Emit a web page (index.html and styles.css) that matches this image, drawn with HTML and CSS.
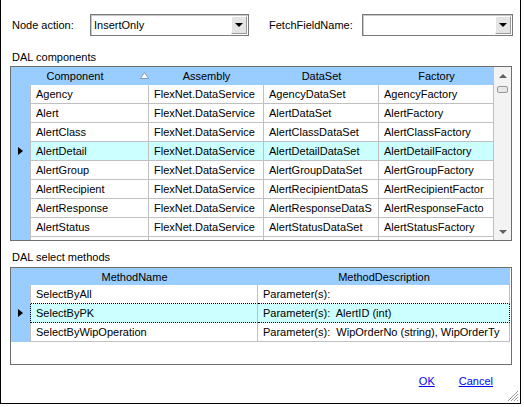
FILE: index.html
```html
<!DOCTYPE html>
<html lang="en">
<head>
  <meta charset="UTF-8" />
  <title>DAL Node Settings</title>
  <link rel="stylesheet" href="styles.css">
</head>
<body>
  <div class="dialog">
    <div class="top-row">
      <span class="field-label">Node action:</span>
      <div class="combo combo-action">
        <span class="combo-text">InsertOnly</span>
        <span class="combo-btn"><i class="arrow-down"></i></span>
      </div>
      <span class="field-label fetch-label">FetchFieldName:</span>
      <div class="combo combo-fetch">
        <span class="combo-text"></span>
        <span class="combo-btn"><i class="arrow-down"></i></span>
      </div>
    </div>

    <div class="section-label first">DAL components</div>
    <div class="grid grid-components">
      <div class="grid-view">
        <table>
          <colgroup>
            <col style="width:20px"><col style="width:118px"><col style="width:115px"><col style="width:115px"><col style="width:115px">
          </colgroup>
          <thead>
            <tr>
              <th class="rh"></th>
              <th class="sorted">Component
                <svg class="sort-glyph" width="9" height="7" viewBox="0 0 9 7"><polygon points="4.5,0.5 8.5,6.5 0.5,6.5" fill="#fff" stroke="#7d9cc0" stroke-width="1"/></svg>
              </th>
              <th>Assembly</th>
              <th>DataSet</th>
              <th>Factory</th>
            </tr>
          </thead>
          <tbody>
            <tr><td class="rh"></td><td>Agency</td><td>FlexNet.DataService</td><td>AgencyDataSet</td><td>AgencyFactory</td></tr>
            <tr><td class="rh"></td><td>Alert</td><td>FlexNet.DataService</td><td>AlertDataSet</td><td>AlertFactory</td></tr>
            <tr><td class="rh"></td><td>AlertClass</td><td>FlexNet.DataService</td><td>AlertClassDataSet</td><td>AlertClassFactory</td></tr>
            <tr class="sel"><td class="rh"><span class="cur"></span></td><td>AlertDetail</td><td>FlexNet.DataService</td><td>AlertDetailDataSet</td><td>AlertDetailFactory</td></tr>
            <tr><td class="rh"></td><td>AlertGroup</td><td>FlexNet.DataService</td><td>AlertGroupDataSet</td><td>AlertGroupFactory</td></tr>
            <tr><td class="rh"></td><td>AlertRecipient</td><td>FlexNet.DataService</td><td>AlertRecipientDataS</td><td>AlertRecipientFactor</td></tr>
            <tr><td class="rh"></td><td>AlertResponse</td><td>FlexNet.DataService</td><td>AlertResponseDataS</td><td>AlertResponseFacto</td></tr>
            <tr><td class="rh"></td><td>AlertStatus</td><td>FlexNet.DataService</td><td>AlertStatusDataSet</td><td>AlertStatusFactory</td></tr>
            <tr><td class="rh"></td><td>AlertType</td><td>FlexNet.DataService</td><td>AlertTypeDataSet</td><td>AlertTypeFactory</td></tr>
          </tbody>
        </table>
      </div>
      <div class="vscroll">
        <div class="sb-btn"><i class="arrow-up"></i></div>
        <div class="sb-thumb"></div>
        <div class="sb-track"></div>
        <div class="sb-btn"><i class="arrow-dn"></i></div>
      </div>
    </div>

    <div class="section-label">DAL select methods</div>
    <div class="grid grid-methods">
      <table>
        <colgroup>
          <col style="width:20px"><col style="width:227px"><col style="width:252px">
        </colgroup>
        <thead>
          <tr>
            <th class="rh"></th>
            <th class="method-head">MethodName</th>
            <th>MethodDescription</th>
          </tr>
        </thead>
        <tbody>
          <tr class="before-sel"><td class="rh"></td><td>SelectByAll</td><td class="last">Parameter(s):</td></tr>
          <tr class="sel focus"><td class="rh"><span class="cur"></span></td><td>SelectByPK</td><td class="last">Parameter(s):  AlertID (int)</td></tr>
          <tr><td class="rh"></td><td>SelectByWipOperation</td><td class="last">Parameter(s):  WipOrderNo (string), WipOrderTy</td></tr>
        </tbody>
      </table>
    </div>

    <div class="footer">
      <a href="#">OK</a>
      <a href="#">Cancel</a>
    </div>

    <svg class="grip" width="12" height="12" viewBox="0 0 12 12">
      <path d="M1 11 L11 1 M4 11 L11 4 M7 11 L11 7 M10 11 L11 10" stroke="#9a9a9a" stroke-width="1"/>
    </svg>
  </div>
</body>
</html>
```

FILE: styles.css
```css
body {
  margin: 0;
  background: #fff;
  font-family: "Liberation Sans", Arial, sans-serif;
  font-size: 11px;
  color: #000;
}

.dialog {
  position: relative;
  width: 521px;
  height: 404px;
  box-sizing: border-box;
  border: 1px solid #000;
  border-top: none;
  padding: 14px 0 0 9px;
}

/* top row with the two combos */
.top-row {
  display: flex;
  align-items: center;
  height: 22px;
}

.field-label {
  width: 78px;
  padding-left: 2px;
  white-space: nowrap;
}

.fetch-label {
  width: 93px;
  padding-left: 0;
  margin-left: 20px;
}

.combo {
  display: flex;
  box-sizing: border-box;
  height: 22px;
  padding: 1px;
  border: 1px solid #7a7a7a;
  box-shadow: inset 1px 1px 0 #c8c8c8;
  background: #fff;
}

.combo-action { width: 159px; }
.combo-fetch { width: 151px; }

.combo-text {
  flex: 1;
  padding-left: 2px;
  line-height: 18px;
}

.combo-btn {
  width: 16px;
  box-sizing: border-box;
  background: #e4e4e4;
  border: 1px solid;
  border-color: #fff #9a9a9a #9a9a9a #fff;
  display: flex;
  align-items: center;
  justify-content: center;
}

.arrow-down {
  border-top: 4px solid #000;
  border-left: 4px solid transparent;
  border-right: 4px solid transparent;
}

.section-label {
  height: 18px;
  line-height: 16px;
  padding-left: 2px;
  margin-top: 8px;
}

.section-label.first {
  height: 17px;
  margin-top: 13px;
}

/* data grids */
.grid {
  box-sizing: border-box;
  width: 502px;
  border: 1px solid #6e6e6e;
  background: #fff;
}

.grid-components {
  height: 175px;
  display: flex;
}

.grid-methods {
  height: 98px;
}

.grid-view {
  width: 483px;
  overflow: hidden;
}

.grid table {
  border-collapse: separate;
  border-spacing: 0;
  table-layout: fixed;
}

.grid-components table { width: 483px; }
.grid-methods table { width: 499px; }

.grid th {
  position: relative;
  height: 18px;
  padding: 0;
  background: #99ccff;
  font-weight: normal;
  text-align: center;
  white-space: nowrap;
}

.grid-methods th { height: 17px; }

.grid th.sorted { padding-right: 30px; }
.grid th.method-head { padding-right: 20px; }

.sort-glyph {
  position: absolute;
  left: 109px;
  top: 5px;
}

.grid td {
  height: 18px;
  padding: 0 0 0 5px;
  border-right: 1px solid #c0c0c0;
  border-bottom: 1px solid #c0c0c0;
  white-space: pre;
  overflow: hidden;
}

.grid td.rh {
  position: relative;
  padding: 0;
  background: #99ccff;
  border-bottom: none;
}

.grid tr.sel td { background: #ccffff; }
.grid tr.sel td.rh { background: #99ccff; }

.cur {
  position: absolute;
  left: 7px;
  top: 5px;
  border-left: 5px solid #000;
  border-top: 4px solid transparent;
  border-bottom: 4px solid transparent;
}

/* focus rectangle on the current method row */
.grid tr.before-sel td:not(.rh) { border-bottom: 1px dotted #000; }
.grid tr.focus td:not(.rh) { border-bottom: 1px dotted #000; }
.grid tr.focus td.rh { border-right: 1px dotted #000; }
.grid tr.focus td.last { border-right: 1px dotted #000; }

/* scrollbar */
.vscroll {
  width: 17px;
  display: flex;
  flex-direction: column;
  background: #f3f3f3;
}

.sb-btn {
  height: 17px;
  display: flex;
  align-items: center;
  justify-content: center;
}

.arrow-up {
  border-bottom: 4px solid #606060;
  border-left: 4px solid transparent;
  border-right: 4px solid transparent;
}

.arrow-dn {
  border-top: 4px solid #606060;
  border-left: 4px solid transparent;
  border-right: 4px solid transparent;
}

.sb-thumb {
  height: 5px;
  margin: 2px 3px 0;
  border: 1px solid #979797;
  border-radius: 2px;
  background: #e8e8e8;
}

.sb-track { flex: 1; }

/* links */
.footer {
  display: flex;
  justify-content: flex-end;
  gap: 24px;
  margin-top: 8px;
  padding-right: 27px;
  line-height: 16px;
}

.footer a {
  color: #0000ff;
  text-decoration: underline;
}

.grip {
  position: absolute;
  right: 1px;
  bottom: 1px;
}
```
